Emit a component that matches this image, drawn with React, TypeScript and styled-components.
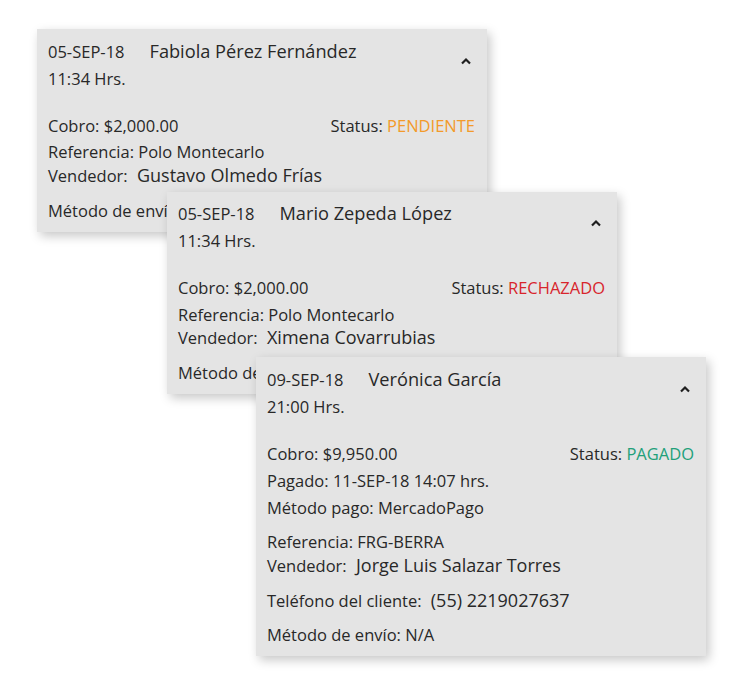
import styled, { createGlobalStyle } from 'styled-components';

const GlobalStyle = createGlobalStyle`
  body {
    margin: 0;
    background: #ffffff;
    font-family: "Open Sans", "Noto Sans", sans-serif;
    color: #282828;
  }
`;

const Stack = styled.div`
  padding: 29px 0 35px 37px;
`;

const CardBox = styled.div<{ $offset: number; $overlap: number }>`
  position: relative;
  width: 450px;
  box-sizing: border-box;
  margin-left: ${(p) => p.$offset}px;
  margin-top: ${(p) => -p.$overlap}px;
  padding: 8.5px 12px 8px 11px;
  background: #e4e4e4;
  box-shadow: 3px 4px 10px rgba(0, 0, 0, 0.22);
  font-size: 16.5px;
`;

const Header = styled.div`
  display: flex;
  justify-content: space-between;
`;

const TitleRow = styled.div`
  display: flex;
  align-items: baseline;
  gap: 25px;
  height: 27px;
  line-height: 27px;
`;

const Client = styled.span`
  font-size: 18.2px;
`;

const Line = styled.div`
  height: 27px;
  line-height: 27px;
  white-space: nowrap;
`;

const Chevron = styled.svg`
  margin: 19px 3px 0 0;
`;

const Body = styled.div`
  margin-top: 20px;
`;

const Group = styled.div<{ $gap?: number }>`
  margin-top: ${(p) => p.$gap ?? 9}px;
`;

const StatusRow = styled(Line)`
  display: flex;
  justify-content: space-between;
`;

const StatusValue = styled.span<{ $color: string }>`
  color: ${(p) => p.$color};
`;

const TightLine = styled(Line)`
  height: 23.5px;
  line-height: 23.5px;
`;

const BigValue = styled.span`
  font-size: 18px;
  margin-left: 5px;
`;

const STATUS_COLORS: Record<string, string> = {
  PENDIENTE: '#f39a2a',
  RECHAZADO: '#d8252c',
  PAGADO: '#22a07a',
};

interface Order {
  date: string;
  hour: string;
  client: string;
  amount: string;
  status: string;
  paid?: string;
  method?: string;
  reference: string;
  seller: string;
  phone?: string;
  shipping: string;
}

const orders: Order[] = [
  {
    date: '05-SEP-18',
    hour: '11:34 Hrs.',
    client: 'Fabiola Pérez Fernández',
    amount: '$2,000.00',
    status: 'PENDIENTE',
    reference: 'Polo Montecarlo',
    seller: 'Gustavo Olmedo Frías',
    shipping: 'N/A',
  },
  {
    date: '05-SEP-18',
    hour: '11:34 Hrs.',
    client: 'Mario Zepeda López',
    amount: '$2,000.00',
    status: 'RECHAZADO',
    reference: 'Polo Montecarlo',
    seller: 'Ximena Covarrubias',
    shipping: 'N/A',
  },
  {
    date: '09-SEP-18',
    hour: '21:00 Hrs.',
    client: 'Verónica García',
    amount: '$9,950.00',
    status: 'PAGADO',
    paid: '11-SEP-18 14:07 hrs.',
    method: 'MercadoPago',
    reference: 'FRG-BERRA',
    seller: 'Jorge Luis Salazar Torres',
    phone: '(55) 2219027637',
    shipping: 'N/A',
  },
];

// card stack: each card shifted right and slid up under the previous one
const placements = [
  { offset: 0, overlap: 0 },
  { offset: 130, overlap: 40 },
  { offset: 219, overlap: 37 },
];

const OrderCard = ({ order, offset, overlap }: { order: Order; offset: number; overlap: number }) => (
  <CardBox $offset={offset} $overlap={overlap}>
    <Header>
      <div>
        <TitleRow>
          <span>{order.date}</span>
          <Client>{order.client}</Client>
        </TitleRow>
        <Line>{order.hour}</Line>
      </div>
      <Chevron width="12" height="8" viewBox="0 0 12 8">
        <polyline points="2,6.5 6,2.5 10,6.5" fill="none" stroke="#1f1f1f" strokeWidth="2.2" />
      </Chevron>
    </Header>
    <Body>
      <StatusRow>
        <span>Cobro: {order.amount}</span>
        <span>
          Status: <StatusValue $color={STATUS_COLORS[order.status]}>{order.status}</StatusValue>
        </span>
      </StatusRow>
      {order.paid && <Line>Pagado: {order.paid}</Line>}
      {order.method && <Line>Método pago: {order.method}</Line>}
      <Group $gap={order.method ? 9.5 : 1.5}>
        <TightLine>Referencia: {order.reference}</TightLine>
        <TightLine>
          Vendedor: <BigValue>{order.seller}</BigValue>
        </TightLine>
      </Group>
      {order.phone && (
        <Group $gap={9.5}>
          <Line>
            Teléfono del cliente: <BigValue>{order.phone}</BigValue>
          </Line>
        </Group>
      )}
      <Group $gap={order.phone ? 7 : 9.5}>
        <Line>Método de envío: {order.shipping}</Line>
      </Group>
    </Body>
  </CardBox>
);

const App = () => (
  <>
    <GlobalStyle />
    <Stack>
      {orders.map((o, i) => (
        <OrderCard key={i} order={o} offset={placements[i].offset} overlap={placements[i].overlap} />
      ))}
    </Stack>
  </>
);

export default App;
